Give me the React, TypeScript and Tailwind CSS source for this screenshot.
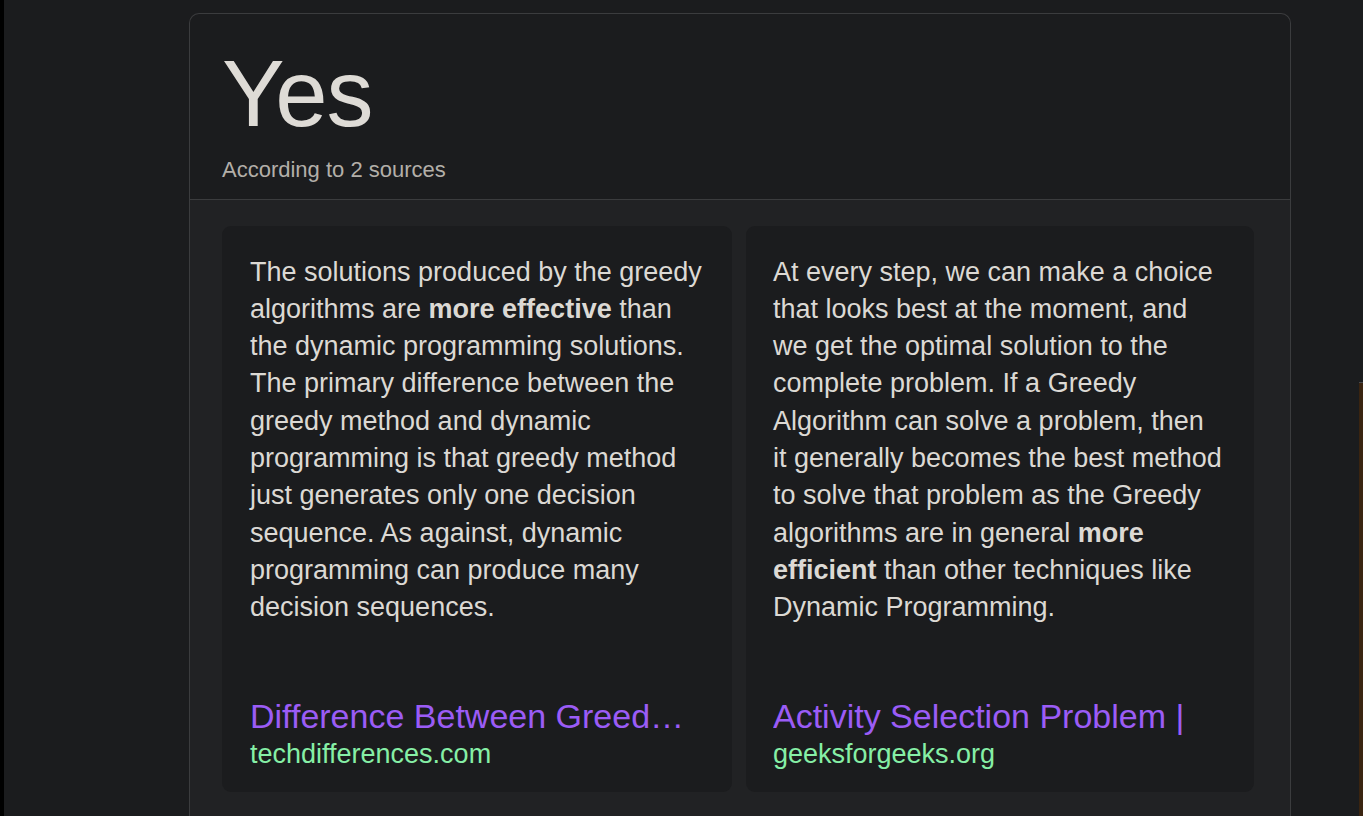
import React from 'react';

const font = { fontFamily: '"Liberation Sans", Arial, Helvetica, sans-serif' };

interface SourceCardProps {
  children: React.ReactNode;
  title: string;
  domain: string;
  pad: string;
}

const SourceCard: React.FC<SourceCardProps> = ({ children, title, domain, pad }) => (
  <div className={`flex flex-col rounded-[9px] bg-[#1b1c1e] pt-[28px] pb-[19px] ${pad}`}>
    <p className="text-[27px] leading-[37.3px] text-[#dcd9d4]">{children}</p>
    <div className="mt-auto pt-[70px]">
      <div className="whitespace-nowrap overflow-hidden text-[34px] leading-[40px] text-[#9b5cf6]">{title}</div>
      <div className="text-[27px] leading-[37px] text-[#86efa6]">{domain}</div>
    </div>
  </div>
);

export default function App() {
  return (
    <div style={font} className="flex h-[816px] w-full overflow-hidden bg-[#1b1c1e]">
      {/* left edge */}
      <div className="w-[4px] shrink-0 bg-black" />

      <div className="flex-1 pl-[185px] pt-[13px]">
        <div className="w-[1102px] rounded-t-[10px] border border-b-0 border-[#3b3c3e]">
          {/* answer header */}
          <div className="px-[32px] pt-[33px] pb-[15px]">
            <div className="text-[94px] leading-[94px] tracking-[-0.01em] text-[#dedbd6]">Yes</div>
            <div className="mt-[15px] text-[22px] leading-[27.5px] text-[#b3afa9]">According to 2 sources</div>
          </div>

          {/* sources */}
          <div className="grid grid-cols-[510px_508px] gap-[14px] border-t border-[#3b3c3e] bg-[#212224] pl-[32px] pt-[26px] pb-[40px]">
            <SourceCard pad="pl-[28px] pr-[27px]" title="Difference Between Greed…" domain="techdifferences.com">
              The solutions produced by the greedy algorithms are <b className="font-bold">more effective</b> than the
              dynamic programming solutions. The primary difference between the greedy method and dynamic programming is
              that greedy method just generates only one decision sequence. As against, dynamic programming can produce
              many decision sequences.
            </SourceCard>
            <SourceCard pad="pl-[27px] pr-[31px]" title="Activity Selection Problem |" domain="geeksforgeeks.org">
              At every step, we can make a choice that looks best at the moment, and we get the optimal solution to the
              complete problem. If a Greedy Algorithm can solve a problem, then it generally becomes the best method to
              solve that problem as the Greedy algorithms are in general <b className="font-bold">more efficient</b> than
              other techniques like Dynamic Programming.
            </SourceCard>
          </div>
        </div>
      </div>

      {/* right edge strip */}
      <div className="flex w-[4px] shrink-0 flex-col">
        <div className="h-[382px]" />
        <div className="flex-1 border-t border-[#4a4a4c] bg-[#3a2410]" />
      </div>
    </div>
  );
}
